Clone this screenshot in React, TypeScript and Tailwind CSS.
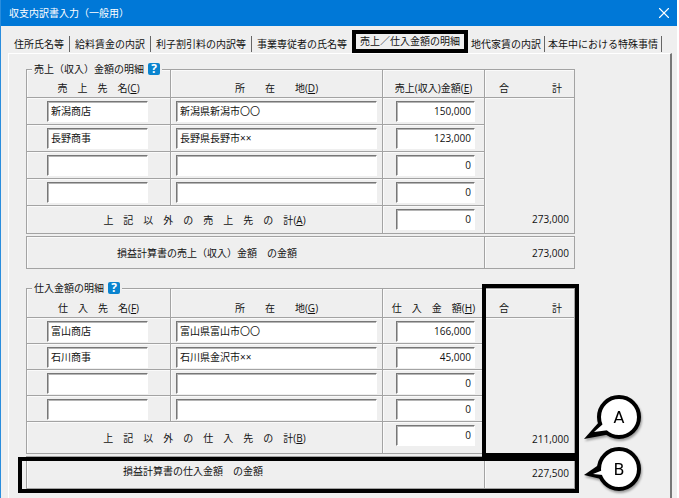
import clsx from 'clsx'
import { X } from 'lucide-react'

interface Entry {
  name: string
  address: string
  amount: string
}

interface Head {
  text: string
  accessKey?: string
}

interface SectionProps {
  id: string
  title: string
  nameHead: Head
  addressHead: Head
  amountHead: Head
  otherHead: Head
  entries: Entry[]
  total: string
  summaryLabel: string
  summaryTotal: string
  headClass: string
  rowClass: string
  otherRowClass: string
  summaryClass: string
  children?: React.ReactNode
}

const TABS = [
  '住所氏名等',
  '給料賃金の内訳',
  '利子割引料の内訳等',
  '事業専従者の氏名等',
  '売上／仕入金額の明細',
  '地代家賃の内訳',
  '本年中における特殊事情',
]
const ACTIVE_TAB = 4

const SALES: Entry[] = [
  { name: '新潟商店', address: '新潟県新潟市〇〇', amount: '150,000' },
  { name: '長野商事', address: '長野県長野市××', amount: '123,000' },
  { name: '', address: '', amount: '0' },
  { name: '', address: '', amount: '0' },
]

const PURCHASES: Entry[] = [
  { name: '富山商店', address: '富山県富山市〇〇', amount: '166,000' },
  { name: '石川商事', address: '石川県金沢市××', amount: '45,000' },
  { name: '', address: '', amount: '0' },
  { name: '', address: '', amount: '0' },
]

export default function App() {
  return (
    <div className="min-h-screen bg-white pr-0.5 font-['Open_Sans','Noto_Sans_CJK_JP',sans-serif] text-[10px] leading-4 text-[#111]">
      <div className="flex min-h-screen flex-col border-l border-[#2a8ddd] bg-[#efefef]">
        <header className="flex h-[26px] items-center justify-between bg-[#0078d7] pr-1 pl-2 text-white">
          <h1>収支内訳書入力（一般用）</h1>
          <button type="button" aria-label="閉じる">
            <X className="size-[18px]" strokeWidth={1.5} />
          </button>
        </header>

        <nav role="tablist" className="flex h-[27px] items-end pl-2">
          {TABS.map((tab, i) => (
            <button
              key={tab}
              type="button"
              role="tab"
              aria-selected={i === ACTIVE_TAB}
              className={clsx(
                'whitespace-nowrap',
                i === ACTIVE_TAB && 'h-[23px] border-4 border-black px-1 leading-[15px]',
                i < ACTIVE_TAB && 'mb-px h-4 px-[5px]',
                i > ACTIVE_TAB && 'mb-px h-4 px-[3px]',
                i !== ACTIVE_TAB && i !== ACTIVE_TAB - 1 && 'border-r border-[#666]',
              )}
            >
              {tab}
            </button>
          ))}
        </nav>

        <main className="mr-[5px] ml-[7px] flex-1 border-t border-r-2 border-l border-t-white border-r-[#777] border-l-white pt-[15px] pr-[95px] pl-[17px]">
          <Section
            id="sales"
            title="売上（収入）金額の明細"
            nameHead={{ text: '売　上　先　名', accessKey: 'C' }}
            addressHead={{ text: '所　　在　　地', accessKey: 'D' }}
            amountHead={{ text: '売上(収入)金額', accessKey: 'E' }}
            otherHead={{ text: '上　記　以　外　の　売　上　先　の　計', accessKey: 'A' }}
            entries={SALES}
            total="273,000"
            summaryLabel="損益計算書の売上（収入）金額　の金額"
            summaryTotal="273,000"
            headClass="h-7"
            rowClass="h-[27px]"
            otherRowClass="h-7"
            summaryClass="pl-[90px]"
          />
          <div className="h-[19px]" />
          <Section
            id="purchases"
            title="仕入金額の明細"
            nameHead={{ text: '仕　入　先　名', accessKey: 'F' }}
            addressHead={{ text: '所　　在　　地', accessKey: 'G' }}
            amountHead={{ text: '仕　入　金　額', accessKey: 'H' }}
            otherHead={{ text: '上　記　以　外　の　仕　入　先　の　計', accessKey: 'B' }}
            entries={PURCHASES}
            total="211,000"
            summaryLabel="損益計算書の仕入金額　の金額"
            summaryTotal="227,500"
            headClass="h-[29px]"
            rowClass="h-[26px]"
            otherRowClass="h-8"
            summaryClass="pl-24 pb-1"
          >
            <div className="pointer-events-none absolute -top-1 -right-1 bottom-8 w-[97px] border-4 border-black" />
            <div className="pointer-events-none absolute -right-1 -bottom-1 -left-2 h-9 border-4 border-black" />
            <Callout
              letter="A"
              className="absolute -right-[68px] bottom-12"
              tail="M16 27 L1 44 L28 39 Z"
              tailFill="M20 29 L11 37 L26 35 Z"
            />
            <Callout
              letter="B"
              className="absolute -right-[68px] -bottom-1"
              tail="M17 17 L1 28 L18 32 Z"
              tailFill="M20 23 L10 27 L20 28 Z"
            />
          </Section>
        </main>
      </div>
    </div>
  )
}

function Section(props: SectionProps) {
  const { id, entries } = props
  const cell = 'border border-[#a3a3a3] shadow-[inset_1px_1px_0_#fafafa]'
  return (
    <fieldset className="relative">
      <legend className="absolute -top-2 left-1.5 z-10 flex h-4 items-center gap-1 bg-[#efefef] px-0.5">
        {props.title}
        <HelpButton />
      </legend>
      <table className="w-full table-fixed border-collapse">
        <colgroup>
          <col className="w-36" />
          <col />
          <col className="w-[102px]" />
          <col className="w-[90px]" />
        </colgroup>
        <thead>
          <tr className={props.headClass}>
            <th className={clsx(cell, 'p-0 pb-px align-bottom font-normal')} id={`${id}-name`}>
              <HeadLabel head={props.nameHead} htmlFor={`${id}-name-0`} />
            </th>
            <th className={clsx(cell, 'p-0 pb-px align-bottom font-normal')} id={`${id}-address`}>
              <HeadLabel head={props.addressHead} htmlFor={`${id}-address-0`} />
            </th>
            <th className={clsx(cell, 'p-0 pb-px align-bottom font-normal')} id={`${id}-amount`}>
              <HeadLabel head={props.amountHead} htmlFor={`${id}-amount-0`} />
            </th>
            <th className={clsx(cell, 'p-0 pb-px align-bottom font-normal')}>
              <span className="flex justify-between pr-3 pl-3.5">
                <span>合</span>
                <span>計</span>
              </span>
            </th>
          </tr>
        </thead>
        <tbody>
          {entries.map((entry, i) => (
            <tr key={i} className={props.rowClass}>
              <td className={clsx(cell, 'pt-[3px] pr-[22px] pl-5 align-top')}>
                <Field id={`${id}-name-${i}`} labelledBy={`${id}-name`} value={entry.name} />
              </td>
              <td className={clsx(cell, 'px-[5px] pt-[3px] align-top')}>
                <Field id={`${id}-address-${i}`} labelledBy={`${id}-address`} value={entry.address} />
              </td>
              <td className={clsx(cell, 'pt-[3px] pr-[9px] pl-[13px] align-top')}>
                <Field id={`${id}-amount-${i}`} labelledBy={`${id}-amount`} value={entry.amount} numeric />
              </td>
              {i === 0 && (
                <td
                  rowSpan={entries.length + 1}
                  className={clsx(cell, 'pr-[5px] pb-1.5 text-right align-bottom')}
                >
                  {props.total}
                </td>
              )}
            </tr>
          ))}
          <tr className={props.otherRowClass}>
            <td colSpan={2} className={clsx(cell, 'text-center')} id={`${id}-other-label`}>
              <HeadLabel head={props.otherHead} htmlFor={`${id}-other`} />
            </td>
            <td className={clsx(cell, 'pt-[3px] pr-[9px] pl-[13px] align-top')}>
              <Field id={`${id}-other`} labelledBy={`${id}-other-label`} value="0" numeric />
            </td>
          </tr>
        </tbody>
      </table>

      <table className="mt-0.5 w-full table-fixed border-collapse">
        <colgroup>
          <col />
          <col className="w-[90px]" />
        </colgroup>
        <tbody>
          <tr className="h-8">
            <th scope="row" className={clsx(cell, 'text-left font-normal', props.summaryClass)}>
              {props.summaryLabel}
            </th>
            <td className={clsx(cell, 'pr-[5px] text-right')}>{props.summaryTotal}</td>
          </tr>
        </tbody>
      </table>
      {props.children}
    </fieldset>
  )
}

function HeadLabel({ head, htmlFor }: { head: Head; htmlFor: string }) {
  return (
    <label htmlFor={htmlFor} className="whitespace-nowrap">
      {head.text}(<u>{head.accessKey}</u>)
    </label>
  )
}

interface FieldProps {
  id: string
  labelledBy: string
  value: string
  numeric?: boolean
}

function Field({ id, labelledBy, value, numeric }: FieldProps) {
  return (
    <input
      id={id}
      type="text"
      aria-labelledby={labelledBy}
      defaultValue={value}
      className={clsx(
        'block h-[21px] w-full border border-t-[#777] border-r-white border-b-white border-l-[#777] bg-white pb-0.5 shadow-[inset_1px_1px_0_#b5b5b5] outline-none',
        numeric ? 'pr-[3px] text-right' : 'pl-[3px]',
      )}
    />
  )
}

function HelpButton() {
  return (
    <button
      type="button"
      aria-label="ヘルプ"
      className="flex size-3 items-center justify-center rounded-xs bg-[#0a84cf] text-[12px] leading-3 font-bold text-white"
    >
      ?
    </button>
  )
}

interface CalloutProps {
  letter: string
  className: string
  tail: string
  tailFill: string
}

function Callout({ letter, className, tail, tailFill }: CalloutProps) {
  return (
    <svg width="60" height="46" viewBox="0 0 60 46" className={clsx('drop-shadow-[1px_2px_1px_#999]', className)}>
      <path d={tail} fill="#000" />
      <circle cx="36" cy="22" r="20" fill="#fff" stroke="#000" strokeWidth="4" />
      <path d={tailFill} fill="#fff" />
      <text x="36" y="28" textAnchor="middle" fontFamily="DejaVu Sans" fontSize="16" fill="#000">
        {letter}
      </text>
    </svg>
  )
}
